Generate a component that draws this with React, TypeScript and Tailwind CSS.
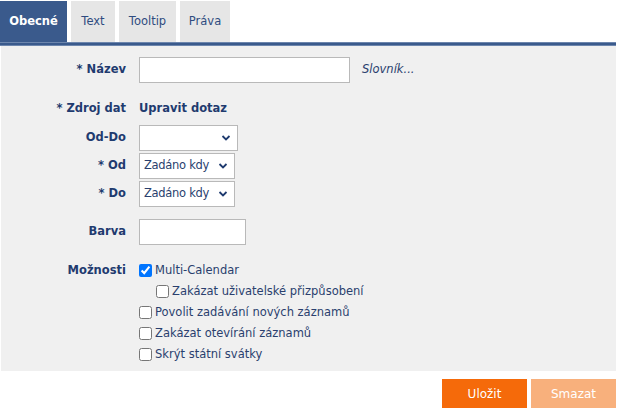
import React from "react";

const font = "font-['DejaVu_Sans',sans-serif]";

function Chevron() {
  return (
    <svg width="10" height="7" viewBox="0 0 10 7" className="absolute right-[6px] top-1/2 -translate-y-1/2">
      <path d="M1.5 1.5 L5 5 L8.5 1.5" fill="none" stroke="#1f3b6f" strokeWidth="1.8" />
    </svg>
  );
}

function Select({ value, width }: { value: string; width: string }) {
  return (
    <div className={`relative h-[26px] ${width} border border-[#b9b9b9] bg-white`}>
      <span className="absolute left-[4px] top-1/2 -translate-y-1/2 tracking-[-0.3px] text-[#2a3f6e]">{value}</span>
      <Chevron />
    </div>
  );
}

function Label({ children }: { children: React.ReactNode }) {
  return <div className="w-[126px] pr-[1px] text-right font-bold text-[#1f3b6f]">{children}</div>;
}

function Check({ label, checked, indent }: { label: string; checked?: boolean; indent?: boolean }) {
  return (
    <label className={`flex h-[21px] items-center gap-[3px] text-[#2a3f6e] ${indent ? "pl-[17px]" : ""}`}>
      <input type="checkbox" defaultChecked={checked} className="m-0 h-[13px] w-[13px]" />
      <span>{label}</span>
    </label>
  );
}

export default function App() {
  return (
    <div className={`h-[410px] w-[618px] bg-white text-[11.5px] ${font}`}>
      <div className="flex h-[42px] items-end gap-[4px]">
        <div className="flex h-[41px] w-[67px] items-center justify-center bg-[#3a5a8c] font-bold text-white">
          Obecné
        </div>
        <div className="flex h-[41px] w-[44px] items-center justify-center bg-[#e6e6e6] text-[#2f4c80]">Text</div>
        <div className="flex h-[41px] w-[57px] items-center justify-center bg-[#e6e6e6] text-[#2f4c80]">Tooltip</div>
        <div className="flex h-[41px] w-[50px] items-center justify-center bg-[#e6e6e6] text-[#2f4c80]">Práva</div>
      </div>
      <div className="h-[4px] w-[616px] border-y border-[#6d86ad] bg-[#3a5a8c]" />
      <div className="ml-[1px] flex h-[325px] w-[615px] flex-col bg-[#f0f0f0] pt-[11px]">
        <div className="flex items-center gap-[12px]">
          <Label>* Název</Label>
          <div className="h-[26px] w-[211px] border border-[#b9b9b9] bg-white" />
          <span className="italic text-[#2a3f6e]">Slovník...</span>
        </div>
        <div className="mt-[18px] flex h-[15px] items-center gap-[12px]">
          <Label>* Zdroj dat</Label>
          <span className="font-bold text-[#1f3b6f]">Upravit dotaz</span>
        </div>
        <div className="mt-[9px] flex items-center gap-[12px]">
          <Label>Od-Do</Label>
          <Select value="" width="w-[99px]" />
        </div>
        <div className="mt-[2px] flex items-center gap-[12px]">
          <Label>* Od</Label>
          <Select value="Zadáno kdy" width="w-[96px]" />
        </div>
        <div className="mt-[2px] flex items-center gap-[12px]">
          <Label>* Do</Label>
          <Select value="Zadáno kdy" width="w-[96px]" />
        </div>
        <div className="mt-[12px] flex items-center gap-[12px]">
          <Label>Barva</Label>
          <div className="h-[26px] w-[107px] border border-[#b9b9b9] bg-white" />
        </div>
        <div className="mt-[15px] flex items-start gap-[12px]">
          <div className="flex h-[21px] items-center">
            <Label>Možnosti</Label>
          </div>
          <div className="flex flex-col">
            <Check label="Multi-Calendar" checked />
            <Check label="Zakázat uživatelské přizpůsobení" indent />
            <Check label="Povolit zadávání nových záznamů" />
            <Check label="Zakázat otevírání záznamů" />
            <Check label="Skrýt státní svátky" />
          </div>
        </div>
      </div>
      <div className="flex w-[616px] justify-end gap-[4px] pt-[8px]">
        <button className="h-[29px] w-[85px] bg-[#f56a0a] text-[12px] text-white">Uložit</button>
        <button className="h-[29px] w-[85px] bg-[#f8b07c] text-[12px] text-white">Smazat</button>
      </div>
    </div>
  );
}
